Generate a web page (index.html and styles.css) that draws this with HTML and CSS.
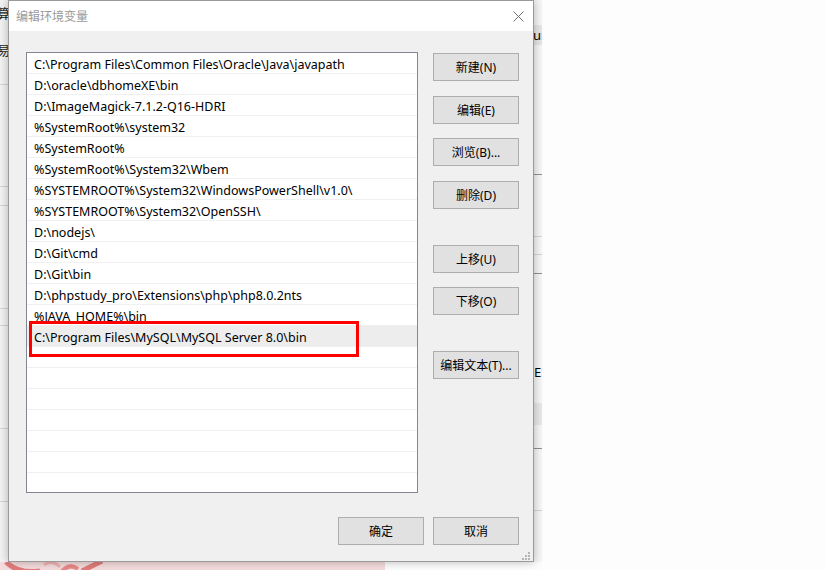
FILE: index.html
```html
<!DOCTYPE html>
<html lang="zh-CN">
<head>
<meta charset="utf-8">
<title>编辑环境变量</title>
<link rel="stylesheet" href="styles.css">
</head>
<body>
<div class="bg-left">
  <span class="bl-t1">计算</span>
  <span class="bl-t2">容易</span>
  <i class="hl l84"></i><i class="hl l186"></i><i class="hl l205"></i><i class="hl l308"></i><i class="hl l325"></i><i class="hl l428"></i><i class="hl l501"></i>
</div>
<div class="bg-right">
  <div class="br-band1"><span>ur</span></div>
  <i class="hl dark r174"></i><i class="hl r236"></i><i class="hl r254"></i><i class="hl dark r273"></i>
  <span class="br-es">ES</span>
  <div class="br-band2"></div>
  <i class="hl dark r448"></i><i class="hl r510"></i>
</div>
<div class="pink">
  <svg class="logo" width="110" height="8" viewBox="0 0 110 8">
    <path d="M6 0 Q18 12 40 9" fill="none" stroke="#e27b7b" stroke-width="5"/>
    <path d="M44 3 Q52 -3 60 5" fill="none" stroke="#f2b3b3" stroke-width="3"/>
    <path d="M62 9 Q70 1 78 7" fill="none" stroke="#e98888" stroke-width="4"/>
    <path d="M82 9 L102 -1" fill="none" stroke="#e27b7b" stroke-width="5"/>
  </svg>
</div>

<div class="dialog">
  <div class="titlebar">
    <span class="title">编辑环境变量</span>
    <svg class="close" width="11" height="11" viewBox="0 0 11 11"><path d="M0.5 0.5 L10.5 10.5 M10.5 0.5 L0.5 10.5" stroke="#707070" stroke-width="1" fill="none"/></svg>
  </div>
  <div class="body">
    <div class="main">
      <div class="list">
        <div class="row">C:\Program Files\Common Files\Oracle\Java\javapath</div>
        <div class="row">D:\oracle\dbhomeXE\bin</div>
        <div class="row">D:\ImageMagick-7.1.2-Q16-HDRI</div>
        <div class="row">%SystemRoot%\system32</div>
        <div class="row">%SystemRoot%</div>
        <div class="row">%SystemRoot%\System32\Wbem</div>
        <div class="row">%SYSTEMROOT%\System32\WindowsPowerShell\v1.0\</div>
        <div class="row">%SYSTEMROOT%\System32\OpenSSH\</div>
        <div class="row">D:\nodejs\</div>
        <div class="row">D:\Git\cmd</div>
        <div class="row">D:\Git\bin</div>
        <div class="row">D:\phpstudy_pro\Extensions\php\php8.0.2nts</div>
        <div class="row">%JAVA_HOME%\bin</div>
        <div class="row selected">C:\Program Files\MySQL\MySQL Server 8.0\bin</div>
        <div class="row"></div>
        <div class="row"></div>
        <div class="row"></div>
        <div class="row"></div>
        <div class="row"></div>
        <div class="row"></div>
        <div class="row"></div>
        <div class="mark"></div>
      </div>
      <div class="side">
        <button class="btn">新建(N)</button>
        <button class="btn m15">编辑(E)</button>
        <button class="btn m14">浏览(B)...</button>
        <button class="btn m15">删除(D)</button>
        <button class="btn m36">上移(U)</button>
        <button class="btn m14">下移(O)</button>
        <button class="btn m36">编辑文本(T)...</button>
      </div>
    </div>
    <div class="footer">
      <button class="btn">确定</button>
      <button class="btn">取消</button>
    </div>
  </div>
  <svg class="grip" width="9" height="9" viewBox="0 0 9 9">
    <rect x="6" y="0" width="2" height="2"/>
    <rect x="3" y="3" width="2" height="2"/><rect x="6" y="3" width="2" height="2"/>
    <rect x="0" y="6" width="2" height="2"/><rect x="3" y="6" width="2" height="2"/><rect x="6" y="6" width="2" height="2"/>
  </svg>
</div>
</body>
</html>
```
FILE: styles.css
```css
html, body {
  margin: 0;
  padding: 0;
}
body {
  width: 826px;
  height: 570px;
  position: relative;
  overflow: hidden;
  background: #fdfdfd;
  font-family: "Noto Sans", "Noto Sans CJK SC", sans-serif;
  font-size: 12px;
  color: #000;
}

/* background windows (desktop) */
.bg-left {
  position: absolute;
  left: 0;
  top: 0;
  width: 8px;
  height: 562px;
  background: #f3f3f3;
  overflow: hidden;
}
.bl-t1, .bl-t2 {
  position: absolute;
  left: -16px;
  white-space: nowrap;
  font-size: 13px;
  color: #222;
}
.bl-t1 { top: 3px; }
.bl-t2 { top: 40px; }
.hl {
  position: absolute;
  left: 0;
  right: 0;
  height: 1px;
  background: #d4d4d4;
}
.hl.dark { background: #8f8f8f; }
.l84 { top: 84px; }
.l186 { top: 186px; }
.l205 { top: 205px; }
.l308 { top: 308px; }
.l325 { top: 325px; }
.l428 { top: 428px; }
.l501 { top: 501px; }

.bg-right {
  position: absolute;
  left: 534px;
  top: 0;
  width: 8px;
  height: 562px;
  background: #f6f6f6;
  overflow: hidden;
}
.br-band1 {
  position: absolute;
  left: 0;
  right: 0;
  top: 25px;
  height: 20px;
  background: #e6e6e6;
  line-height: 20px;
  font-size: 13px;
}
.br-band1 span { margin-left: -1px; }
.br-band2 {
  position: absolute;
  left: 0;
  right: 0;
  top: 403px;
  height: 22px;
  background: #e8e8e8;
}
.br-es {
  position: absolute;
  left: 0;
  top: 363px;
  font-size: 13px;
}
.r174 { top: 174px; }
.r236 { top: 236px; }
.r254 { top: 254px; }
.r273 { top: 273px; }
.r448 { top: 448px; }
.r510 { top: 510px; }

.pink {
  position: absolute;
  left: 0;
  top: 562px;
  width: 385px;
  height: 8px;
  background: #f5dcdc;
}
.logo { display: block; }

/* dialog */
.dialog {
  position: absolute;
  left: 8px;
  top: 0;
  width: 526px;
  height: 562px;
  box-sizing: border-box;
  border: 1px solid #9a9a9a;
  background: #f0f0f0;
  box-shadow: 0 0 9px rgba(0, 0, 0, 0.28);
  display: flex;
  flex-direction: column;
}
.titlebar {
  height: 30px;
  flex: none;
  background: #fff;
  display: flex;
  align-items: center;
  justify-content: space-between;
  padding: 0 9px 0 7px;
}
.title {
  color: #9a9a9a;
  font-size: 12px;
}
.close { display: block; }

.body {
  flex: 1;
  padding: 21px 14px 16px 17px;
  display: flex;
  flex-direction: column;
}
.main {
  display: flex;
  gap: 15px;
}
.list {
  width: 392px;
  height: 441px;
  box-sizing: border-box;
  border: 1px solid #828790;
  background: #fff;
  position: relative;
  overflow: hidden;
  flex: none;
}
.row {
  height: 21px;
  box-sizing: border-box;
  border-bottom: 1px solid #f0f0f0;
  padding: 3px 0 0 7px;
  font-size: 12.5px;
  line-height: 17px;
  white-space: nowrap;
}
.row.selected {
  background: #ededed;
}
.mark {
  position: absolute;
  left: 2px;
  top: 268px;
  width: 330px;
  height: 36px;
  box-sizing: border-box;
  border: 3px solid #f00;
}

.side {
  width: 86px;
  display: flex;
  flex-direction: column;
  padding-top: 1px;
}
.btn {
  width: 86px;
  height: 28px;
  box-sizing: border-box;
  border: 1px solid #adadad;
  background: #e1e1e1;
  font: inherit;
  color: #000;
  padding: 0;
  margin: 0;
}
.m14 { margin-top: 14px; }
.m15 { margin-top: 15px; }
.m36 { margin-top: 36px; }

.footer {
  margin-top: 24px;
  display: flex;
  justify-content: flex-end;
  gap: 9px;
}

.grip {
  position: absolute;
  right: 2px;
  bottom: 0;
  fill: #b5b5b5;
}
```
